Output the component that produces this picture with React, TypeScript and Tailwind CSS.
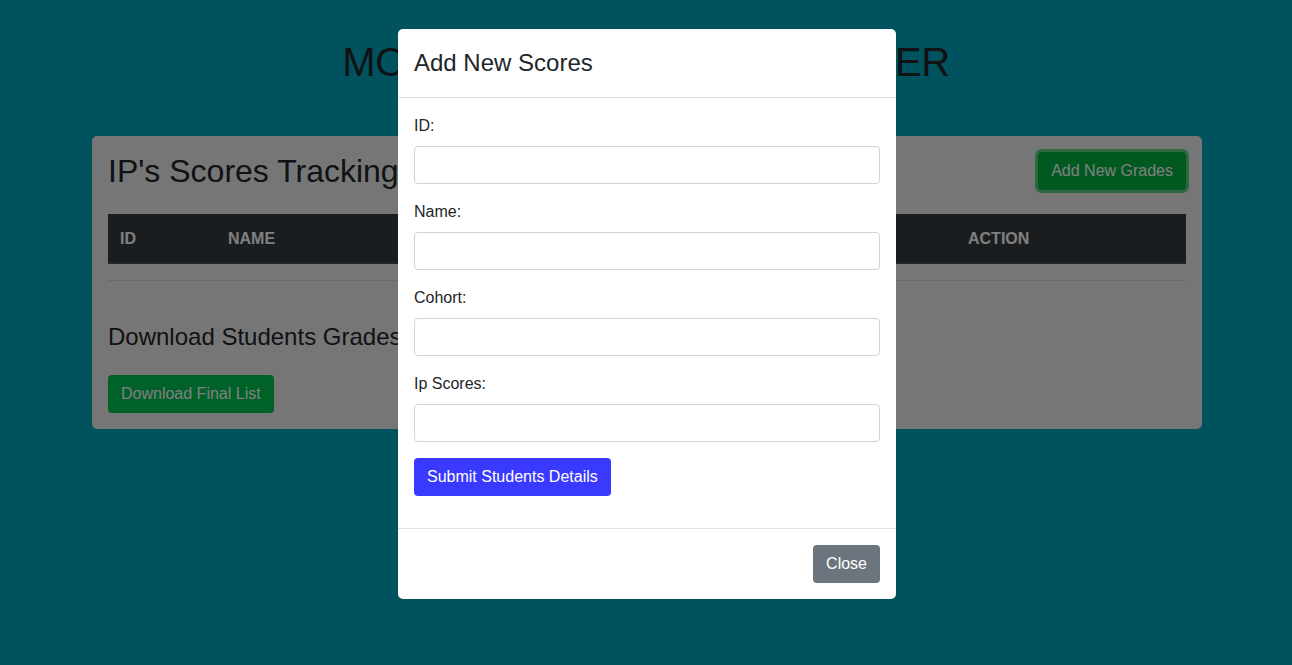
import React from "react";

const font = "font-['Liberation_Sans',Arial,Helvetica,sans-serif]";

function Field({ label }: { label: string }) {
  return (
    <div className="mb-4">
      <label className="mb-2 block text-base leading-6 text-[#212529]">{label}</label>
      <input
        type="text"
        className="block h-[38px] w-full rounded-[4px] border border-[#ced4da] bg-white px-3 text-base text-[#495057] outline-none"
      />
    </div>
  );
}

export default function App() {
  return (
    <div className={`relative min-h-[665px] overflow-hidden bg-[#00a4bc] ${font}`}>
      <h1 className="pt-[38px] text-center text-[40px] leading-[48px] tracking-[-0.45px] text-[#212529]">
        MORINGA IP SCORES TRACKER
      </h1>

      <div className="ml-[92px] mt-[50px] w-[1110px] rounded-[5px] bg-[#ececec] p-4">
        <div className="mb-6 flex items-start justify-between">
          <h2 className="text-[32px] leading-[38px] text-[#212529]">IP's Scores Tracking</h2>
          <button
            type="button"
            className="h-[38px] rounded-[4px] bg-[#00b440] px-[13px] text-base text-white ring-[3px] ring-[#5ccf80]"
          >
            Add New Grades
          </button>
        </div>

        <table className="w-full border-collapse">
          <thead>
            <tr className="border-b-2 border-[#454d55] bg-[#343a40] text-left text-base font-bold text-white">
              <th className="w-[108px] px-3 pb-[11px] pt-[13px] leading-6">ID</th>
              <th className="w-[250px] px-3 pb-[11px] pt-[13px] leading-6">NAME</th>
              <th className="w-[250px] px-3 pb-[11px] pt-[13px] leading-6">COHORT</th>
              <th className="w-[240px] px-3 pb-[11px] pt-[13px] leading-6">IP SCORES</th>
              <th className="px-3 pb-[11px] pt-[13px] leading-6">ACTION</th>
            </tr>
          </thead>
          <tbody />
        </table>

        <hr className="mt-4 border-t border-[#d2d2d2]" />

        <h4 className="mt-[41px] text-2xl leading-[29px] text-[#212529]">
          Download Students Grades
        </h4>
        <button
          type="button"
          className="mt-[24px] h-[38px] rounded-[4px] bg-[#00c252] px-[13px] text-base text-white"
        >
          Download Final List
        </button>
      </div>

      <div className="absolute inset-0 bg-black/50" />

      <div className="absolute left-[398px] top-[29px] w-[498px] rounded-[5px] bg-white">
        <div className="border-b border-[#dee2e6] p-4">
          <h4 className="text-2xl leading-9 text-[#212529]">Add New Scores</h4>
        </div>
        <div className="px-4 pb-8 pt-4">
          <Field label="ID:" />
          <Field label="Name:" />
          <Field label="Cohort:" />
          <Field label="Ip Scores:" />
          <button
            type="button"
            className="h-[38px] rounded-[4px] bg-[#3a3aff] px-[13px] text-base text-white"
          >
            Submit Students Details
          </button>
        </div>
        <div className="flex justify-end border-t border-[#dee2e6] p-4">
          <button
            type="button"
            className="h-[38px] rounded-[4px] bg-[#6c757d] px-[13px] text-base text-white"
          >
            Close
          </button>
        </div>
      </div>
    </div>
  );
}
